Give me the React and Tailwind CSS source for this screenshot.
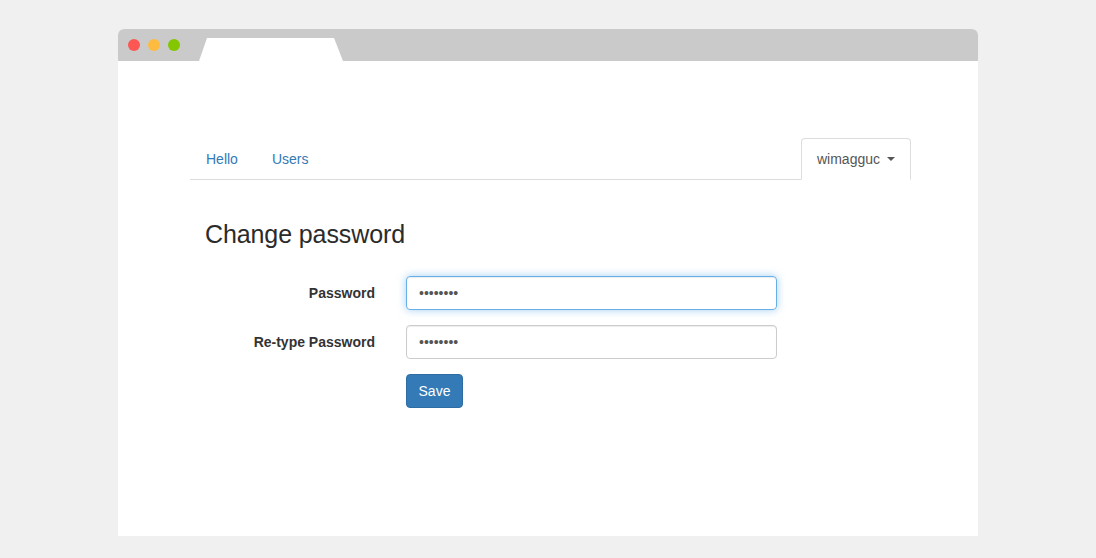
import { useState } from 'react';

const NavTab = ({ label, active, caret, last }) => (
  <li className={last ? '-mb-px' : 'mr-[2px] -mb-px'}>
    <a
      href="#"
      className={
        active
          ? 'flex items-center px-[15px] py-[10px] leading-[20px] border border-[#ddd] border-b-transparent rounded-t-[4px] bg-white text-[#555]'
          : 'flex items-center px-[15px] py-[10px] leading-[20px] border border-transparent rounded-t-[4px] text-[#337ab7]'
      }
    >
      {label}
      {caret && (
        <span className="ml-[7px] inline-block w-0 h-0 border-t-[4px] border-t-[#555] border-x-[4px] border-x-transparent" />
      )}
    </a>
  </li>
);

const FormRow = ({ label, children }) => (
  <div className="flex items-center mb-[15px]">
    <label className="w-[170px] text-right font-bold text-[#333]">{label}</label>
    <div className="ml-[31px]">{children}</div>
  </div>
);

const App = () => {
  const [password] = useState('12345678');

  return (
    <div
      className="w-[1096px] h-[558px] bg-[#f0f0f0] pt-[29px] pl-[118px] text-[14px] text-[#333]"
      style={{ fontFamily: '"Liberation Sans", Arial, sans-serif' }}
    >
      <div className="w-[860px] h-[507px] flex flex-col bg-white rounded-t-[6px] overflow-hidden">
        {/* browser chrome */}
        <div className="h-[32px] bg-[#cacaca] flex items-end shrink-0">
          <div className="self-center flex gap-[8px] pl-[10px]">
            <span className="w-[12px] h-[12px] rounded-full bg-[#fc5753]" />
            <span className="w-[12px] h-[12px] rounded-full bg-[#fdbc40]" />
            <span className="w-[12px] h-[12px] rounded-full bg-[#84c600]" />
          </div>
          <svg width="144" height="23" viewBox="0 0 144 23" className="ml-[19px] block">
            <polygon points="0,23 8,0 135,0 144,23" fill="#fff" />
          </svg>
        </div>

        {/* page */}
        <div className="pt-[77px] pl-[72px] pr-[67px]">
          <ul className="flex border-b border-[#ddd]">
            <NavTab label="Hello" />
            <NavTab label="Users" />
            <li className="flex-1" />
            <NavTab label="wimagguc" active caret last />
          </ul>

          <div className="pl-[15px]">
            <h2 className="mt-[41px] text-[25px] leading-[26px] font-medium text-[#2b2b2b] tracking-[-0.1px]">Change password</h2>

            <form className="mt-[29px]">
              <FormRow label="Password">
                <input
                  type="password"
                  readOnly
                  value={password}
                  className="w-[371px] h-[34px] px-[12px] rounded-[4px] border border-[#66afe9] outline-none text-[#555] shadow-[inset_0_1px_1px_rgba(0,0,0,0.075),0_0_8px_rgba(102,175,233,0.6)]"
                />
              </FormRow>
              <FormRow label="Re-type Password">
                <input
                  type="password"
                  readOnly
                  value={password}
                  className="w-[371px] h-[34px] px-[12px] rounded-[4px] border border-[#ccc] outline-none text-[#555] shadow-[inset_0_1px_1px_rgba(0,0,0,0.075)]"
                />
              </FormRow>
              <div className="flex">
                <div className="w-[170px]" />
                <button
                  type="button"
                  className="ml-[31px] h-[34px] w-[57px] leading-[20px] rounded-[4px] bg-[#337ab7] border border-[#2e6da4] text-white"
                >
                  Save
                </button>
              </div>
            </form>
          </div>
        </div>
      </div>
    </div>
  );
};

export default App;
